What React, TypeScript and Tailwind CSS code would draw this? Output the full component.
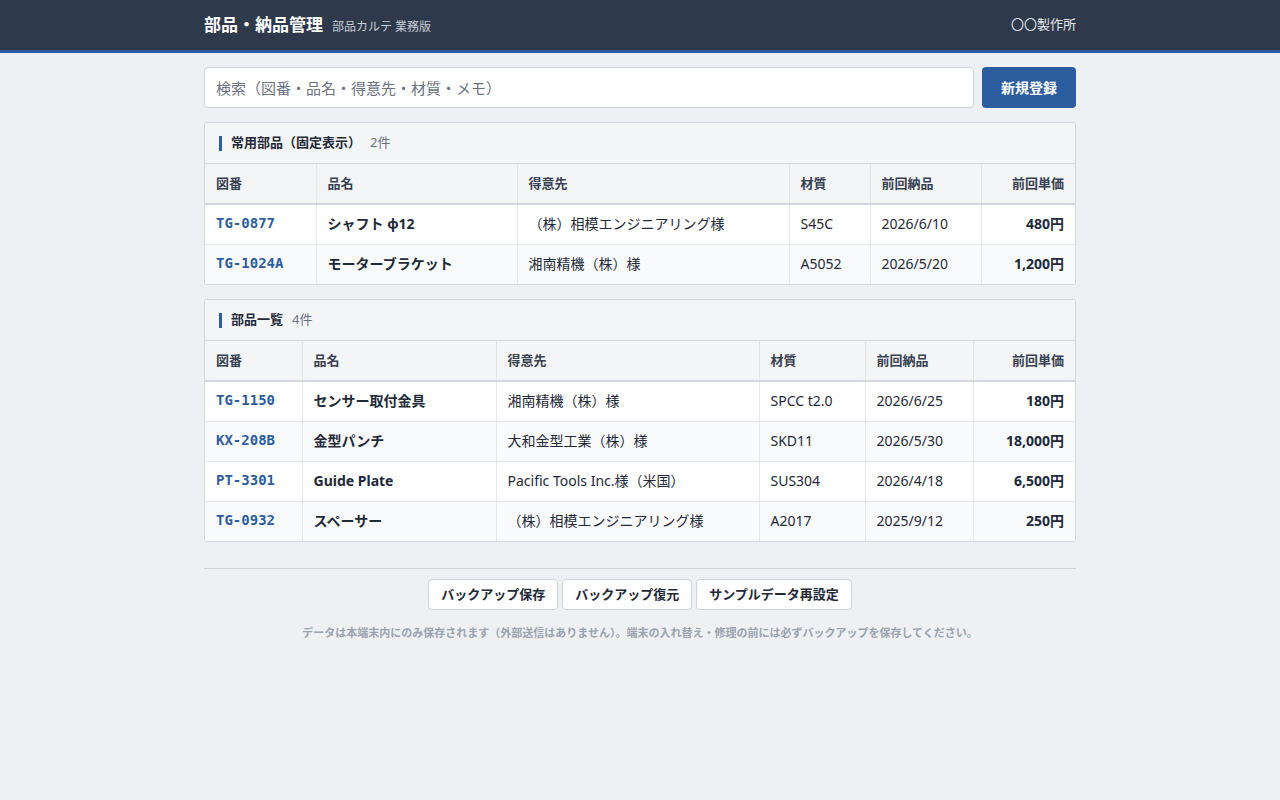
import React from "react";

type Row = { code: string; name: string; client: string; mat: string; date: string; price: string };

const fixed: Row[] = [
  { code: "TG-0877", name: "シャフト φ12", client: "（株）相模エンジニアリング様", mat: "S45C", date: "2026/6/10", price: "480円" },
  { code: "TG-1024A", name: "モーターブラケット", client: "湘南精機（株）様", mat: "A5052", date: "2026/5/20", price: "1,200円" },
];

const all: Row[] = [
  { code: "TG-1150", name: "センサー取付金具", client: "湘南精機（株）様", mat: "SPCC t2.0", date: "2026/6/25", price: "180円" },
  { code: "KX-208B", name: "金型パンチ", client: "大和金型工業（株）様", mat: "SKD11", date: "2026/5/30", price: "18,000円" },
  { code: "PT-3301", name: "Guide Plate", client: "Pacific Tools Inc.様（米国）", mat: "SUS304", date: "2026/4/18", price: "6,500円" },
  { code: "TG-0932", name: "スペーサー", client: "（株）相模エンジニアリング様", mat: "A2017", date: "2025/9/12", price: "250円" },
];

function Card({ title, count, rows, widths }: { title: string; count: string; rows: Row[]; widths: number[] }) {
  const heads = ["図番", "品名", "得意先", "材質", "前回納品", "前回単価"];
  return (
    <div className="border border-[#d4d7dc] rounded-[3px] bg-white overflow-hidden">
      <div className="h-[41px] bg-[#f4f5f7] border-b border-[#d4d7dc] flex items-center pl-[14px]">
        <span className="w-[3px] h-[15px] bg-[#2c5d9e] mr-[9px]" />
        <span className="text-[13px] font-bold text-[#1f2937]">{title}</span>
        <span className="text-[13px] text-[#6b7280] ml-[9px]">{count}</span>
      </div>
      <table className="w-full border-collapse table-fixed">
        <colgroup>
          {widths.map((w, i) => (
            <col key={i} style={{ width: w }} />
          ))}
        </colgroup>
        <thead>
          <tr className="h-[40px] bg-[#f4f5f7] border-b-2 border-[#d4d7dc]">
            {heads.map((h, i) => (
              <th
                key={h}
                className={`px-[11px] text-[13px] font-bold text-[#374151] ${i > 0 ? "border-l border-[#e1e4e8]" : ""} ${i === 5 ? "text-right" : "text-left"}`}
              >
                {h}
              </th>
            ))}
          </tr>
        </thead>
        <tbody>
          {rows.map((r, idx) => (
            <tr key={r.code} className={`h-[40px] ${idx > 0 ? "border-t border-[#e5e7eb]" : ""} ${idx % 2 === 1 ? "bg-[#f9fafb]" : "bg-white"}`}>
              <td className="px-[11px] pb-[1px] text-[14px] font-bold text-[#2c5d9e] font-['DejaVu_Sans_Mono',monospace]">{r.code}</td>
              <td className="px-[11px] pb-[1px] text-[14px] font-bold text-[#1f2937] border-l border-[#e5e7eb] whitespace-nowrap">{r.name}</td>
              <td className="px-[11px] pb-[1px] text-[14px] text-[#1f2937] border-l border-[#e5e7eb] whitespace-nowrap">{r.client}</td>
              <td className="px-[11px] pb-[1px] text-[14px] text-[#1f2937] border-l border-[#e5e7eb] whitespace-nowrap">{r.mat}</td>
              <td className="px-[11px] pb-[1px] text-[14px] text-[#1f2937] border-l border-[#e5e7eb]">{r.date}</td>
              <td className="px-[11px] pb-[1px] text-[14px] font-bold text-[#1f2937] border-l border-[#e5e7eb] text-right">{r.price}</td>
            </tr>
          ))}
        </tbody>
      </table>
    </div>
  );
}

export default function App() {
  return (
    <div className="min-h-[800px] bg-[#eef0f3] font-['Noto_Sans','Noto_Sans_CJK_JP',sans-serif]">
      <header className="h-[53px] bg-[#2e3a4b] border-b-[3px] border-[#2c5d9e]">
        <div className="w-[872px] mx-auto h-full flex items-center justify-between">
          <div className="flex items-baseline">
            <span className="text-[17px] font-bold text-white">部品・納品管理</span>
            <span className="text-[12px] text-[#c7ccd4] ml-[9px]">部品カルテ 業務版</span>
          </div>
          <span className="text-[13px] text-[#e5e7eb]">〇〇製作所</span>
        </div>
      </header>
      <main className="w-[872px] mx-auto pt-[14px]">
        <div className="flex gap-[8px]">
          <input
            className="flex-1 h-[41px] bg-white border border-[#cfd3d9] rounded-[4px] px-[11px] text-[15px] placeholder:text-[#6b7280] outline-none"
            placeholder="検索（図番・品名・得意先・材質・メモ）"
          />
          <button className="w-[94px] h-[41px] bg-[#2c5d9e] text-white text-[14px] font-bold rounded-[4px]">新規登録</button>
        </div>
        <div className="mt-[14px]">
          <Card title="常用部品（固定表示）" count="2件" rows={fixed} widths={[111, 201, 272, 81, 111, 94]} />
        </div>
        <div className="mt-[14px]">
          <Card title="部品一覧" count="4件" rows={all} widths={[97, 194, 263, 106, 108, 102]} />
        </div>
        <div className="mt-[26px] border-t border-[#cfd3d9] pt-[10px] flex flex-col items-center">
          <div className="flex gap-[4px]">
            {["バックアップ保存", "バックアップ復元", "サンプルデータ再設定"].map((b) => (
              <button key={b} className="h-[31px] px-[12px] bg-white border border-[#cfd3d9] rounded-[4px] text-[13px] font-bold text-[#1f2937]">
                {b}
              </button>
            ))}
          </div>
          <p className="mt-[15px] text-[11px] font-bold text-[#9ca3af]">
            データは本端末内にのみ保存されます（外部送信はありません）。端末の入れ替え・修理の前には必ずバックアップを保存してください。
          </p>
        </div>
      </main>
    </div>
  );
}
